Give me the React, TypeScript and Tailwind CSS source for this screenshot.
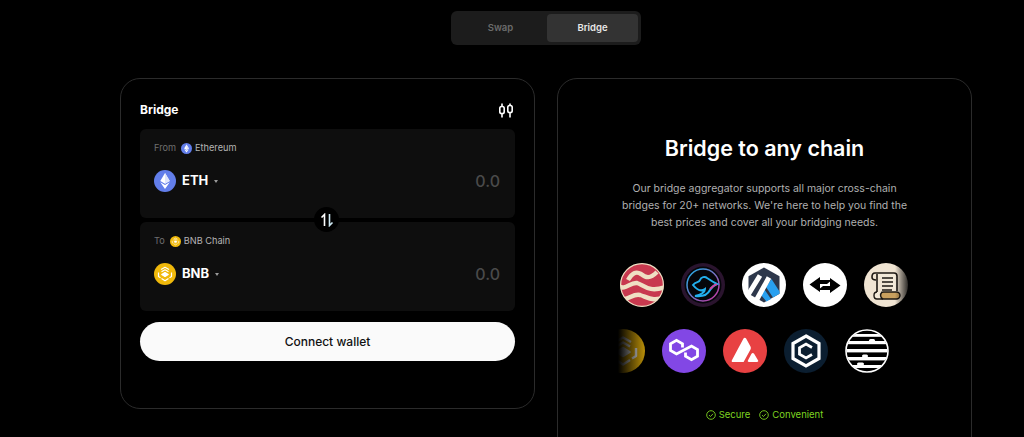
const font = "font-['Inter','Liberation_Sans',sans-serif]";

function EthIcon({ size }: { size: number }) {
  return (
    <svg width={size} height={size} viewBox="0 0 44 44" className="shrink-0">
      <circle cx="22" cy="22" r="22" fill="#627eea" />
      <path d="M22 6 L12.5 22 L22 27.5 L31.5 22 Z" fill="#fff" />
      <path d="M22 6 L22 27.5 L31.5 22 Z" fill="#dfe5fb" />
      <path d="M12.5 24.5 L22 38 L31.5 24.5 L22 30 Z" fill="#fff" />
    </svg>
  );
}

function BnbIcon({ size }: { size: number }) {
  return (
    <svg width={size} height={size} viewBox="0 0 44 44" className="shrink-0">
      <circle cx="22" cy="22" r="22" fill="#f0b90b" />
      <g fill="none" stroke="#fff" strokeWidth="2.4" strokeLinejoin="round">
        <path d="M14 13 L22 8.5 L30 13" />
        <path d="M9 19 V27 L13 29.5 M35 19 V27 L31 29.5" />
        <path d="M15 17.5 L22 13.5 L29 17.5" />
        <path d="M15.5 23 L22 19 L28.5 23 L22 27 Z" fill="#fff" />
        <path d="M15 31 L22 35.5 L29 31" />
      </g>
    </svg>
  );
}

function Liquality() {
  return (
    <svg width="44" height="44" viewBox="0 0 44 44" className="shrink-0">
      <defs>
        <clipPath id="liq">
          <circle cx="22" cy="22" r="21.5" />
        </clipPath>
      </defs>
      <g clipPath="url(#liq)">
        <rect width="44" height="44" fill="#c8394f" />
        <g fill="none" stroke="#efe0c4" strokeWidth="4.4">
          <path d="M8 17 C12 10 16 8 21 11 C26 15 30 16 37 9" />
          <path d="M-1 23 C5 28 10 19 17 20 C24 22 28 30 46 24" />
          <path d="M-1 34 C6 40 12 30 20 32 C27 34 34 40 46 33" />
        </g>
      </g>
      <circle cx="22" cy="22" r="21.4" fill="none" stroke="#efe0c4" strokeWidth="1.2" />
    </svg>
  );
}

function Hop() {
  return (
    <svg width="44" height="44" viewBox="0 0 44 44" className="shrink-0">
      <defs>
        <linearGradient id="hopRing" x1="0" y1="0" x2="1" y2="1">
          <stop offset="0" stopColor="#19b5ea" />
          <stop offset="1" stopColor="#d0309f" />
        </linearGradient>
      </defs>
      <circle cx="22" cy="22" r="22" fill="#2a142e" />
      <circle cx="22" cy="22" r="18.5" fill="#05060a" />
      <circle cx="22" cy="22" r="16" fill="none" stroke="url(#hopRing)" strokeWidth="1.5" />
      <path
        d="M12 22 C15 18 18 20 19 17 C20 14 24 13 26 15 C29 17 32 19 36 21 C33 22 31 24 29 27 C27 31 22 34 14 33 C20 32 24 29 24 26 C20 29 16 27 12 22 Z"
        fill="none"
        stroke="#22b0ee"
        strokeWidth="2"
      />
      <path d="M29 26 C31 24 33 22 36 21" stroke="#d6409f" strokeWidth="1.8" fill="none" />
    </svg>
  );
}

function Arbitrum() {
  return (
    <svg width="44" height="44" viewBox="0 0 44 44" className="shrink-0">
      <circle cx="22" cy="22" r="22" fill="#fff" />
      <path d="M22 4.5 L37.5 13.2 V30.8 L22 39.5 L6.5 30.8 V13.2 Z" fill="#2d374b" />
      <path d="M29.5 16 L37.5 28.5 V30.8 L31 34.5 L24 24 Z" fill="#28a0f0" />
      <path d="M22.5 26.5 L29 36 L24.5 38.5 L19 32 Z" fill="#28a0f0" />
      <path d="M6 32 L18 12.5 M14.5 37 L27 14.5" stroke="#fff" strokeWidth="5" fill="none" />
    </svg>
  );
}

function Swing() {
  return (
    <svg width="44" height="44" viewBox="0 0 44 44" className="shrink-0">
      <circle cx="22" cy="22" r="22" fill="#fff" />
      <path d="M6.5 21.5 L17 14 V17 H29 L24 21 H17 V29 Z" fill="#000" />
      <path d="M37.5 22.5 L27 30 V27 H15 L20 23 H27 V15 Z" fill="#000" />
    </svg>
  );
}

function Scroll() {
  return (
    <svg width="44" height="44" viewBox="0 0 44 44" className="shrink-0">
      <circle cx="22" cy="22" r="22" fill="#f0e4d2" />
      <path d="M11 10 C9 10 8 12 8 14 C8 16 10 17 12 17" fill="none" stroke="#1c1712" strokeWidth="1.6" />
      <path d="M11 10 H30 C32 10 33 11 33 13 V28" fill="#f3e9d8" stroke="#1c1712" strokeWidth="1.6" />
      <path d="M13 11 V30" stroke="#1c1712" strokeWidth="1.6" />
      <path d="M18 15 H29 M18 19 H29 M18 23 H29 M18 27 H28" stroke="#1c1712" strokeWidth="1.6" />
      <rect x="16" y="29" width="20" height="7" rx="3.5" fill="#c9a05e" stroke="#1c1712" strokeWidth="1.4" />
      <path d="M13 29 C9 29 9 36 13 36 H19 C16 35 16 31 18 29" fill="#f3e9d8" stroke="#1c1712" strokeWidth="1.4" />
    </svg>
  );
}

function Polygon() {
  return (
    <svg width="44" height="44" viewBox="0 0 44 44" className="shrink-0">
      <circle cx="22" cy="22" r="22" fill="#8247e5" />
      <path
        d="M20.5 18.5 V14.8 L14.5 11.3 L8.5 14.8 V21.5 L14.5 25 L29.5 17 L35.5 20.5 V27.2 L29.5 30.7 L23.5 27.2 V23.5"
        fill="none"
        stroke="#fff"
        strokeWidth="2.8"
      />
      <path d="M14.5 25 L20.5 28.5 V32" fill="none" />
    </svg>
  );
}

function Avalanche() {
  return (
    <svg width="44" height="44" viewBox="0 0 44 44" className="shrink-0">
      <circle cx="22" cy="22" r="22" fill="#e84142" />
      <path d="M20.5 9.5 C21.2 8.4 22.4 8.4 23.1 9.5 L27.5 17.5 C28 18.6 28 19.6 27.5 20.6 L20.6 33 H10 C8.8 33 8.3 32.2 8.9 31.2 Z" fill="#fff" />
      <path d="M28.5 24.8 C29.2 23.6 30.4 23.6 31.1 24.8 L35 31.3 C35.6 32.3 35.1 33 34 33 H26 C24.9 33 24.4 32.3 25 31.3 Z" fill="#fff" />
    </svg>
  );
}

function Celer() {
  return (
    <svg width="44" height="44" viewBox="0 0 44 44" className="shrink-0">
      <circle cx="22" cy="22" r="22" fill="#0b1e30" />
      <path d="M22 7 L35 14.5 V29.5 L22 37 L9 29.5 V14.5 Z" fill="none" stroke="#fff" strokeWidth="3.2" />
      <path d="M28 18.5 L22 15 L15.5 18.7 V25.3 L22 29 L28 25.5" fill="none" stroke="#fff" strokeWidth="2.8" />
    </svg>
  );
}

function Stripes() {
  return (
    <svg width="44" height="44" viewBox="0 0 44 44" className="shrink-0">
      <defs>
        <clipPath id="stripes">
          <circle cx="22" cy="22" r="20.5" />
        </clipPath>
      </defs>
      <circle cx="22" cy="22" r="21" fill="#000" stroke="#fff" strokeWidth="1.6" />
      <g clipPath="url(#stripes)" fill="#fff">
        <rect x="0" y="5" width="44" height="2.8" />
        <rect x="0" y="12" width="44" height="3.2" />
        <rect x="24" y="10" width="6" height="3" rx="1.5" />
        <rect x="0" y="20" width="44" height="3.4" />
        <rect x="0" y="28" width="44" height="3.4" />
        <rect x="17" y="25.5" width="6" height="3" rx="1.5" />
        <rect x="0" y="36" width="44" height="3" />
        <rect x="12" y="33.5" width="7" height="3" rx="1.5" />
      </g>
    </svg>
  );
}

function CandlesIcon() {
  return (
    <svg width="16" height="15" viewBox="0 0 16 15" fill="none" stroke="#fff" strokeWidth="1.6">
      <path d="M4 0.5 V3.5 M4 10.5 V14.5 M12 0.5 V2.5 M12 9.5 V14.5" />
      <rect x="1.8" y="3.5" width="4.4" height="7" rx="1.8" />
      <rect x="9.8" y="2.5" width="4.4" height="7" rx="1.8" />
    </svg>
  );
}

function SwapArrows() {
  return (
    <svg width="14" height="14" viewBox="0 0 14 14" fill="none" strokeWidth="1.6">
      <path d="M4.5 13 V1.5 L1.5 4.5" stroke="#fff" />
      <path d="M9.5 1 V12.5 L12.5 9.5" stroke="#cfeaf5" />
    </svg>
  );
}

function Check() {
  return (
    <svg width="10" height="10" viewBox="0 0 10 10" fill="none" stroke="#7ed321" strokeWidth="0.9">
      <circle cx="5" cy="5" r="4.3" />
      <path d="M3 5.1 L4.5 6.5 L7 3.8" />
    </svg>
  );
}

function TokenPanel({
  label,
  chain,
  symbol,
  icon,
  chainIcon,
}: {
  label: string;
  chain: string;
  symbol: string;
  icon: React.ReactNode;
  chainIcon: React.ReactNode;
}) {
  return (
    <div className="h-[89px] rounded-[6px] bg-[#0e0e0e] pl-[14px] pr-[15px] pt-[12px]">
      <div className="flex h-[14px] items-center text-[9.2px] leading-none">
        <span className="text-[#6f6f6f]">{label}</span>
        <span className="ml-[5px] mr-[3px]">{chainIcon}</span>
        <span className="text-[#b5b5b5]">{chain}</span>
      </div>
      <div className="mt-[14px] flex h-[24px] items-center">
        {icon}
        <span className="ml-[6px] text-[13px] font-bold text-white">{symbol}</span>
        <span className="ml-[6px] mt-[1px] h-0 w-0 border-x-[2.5px] border-t-[3px] border-x-transparent border-t-[#9a9a9a]" />
        <span className="ml-auto text-[16px] font-medium text-[#4a4a4a]">0.0</span>
      </div>
    </div>
  );
}

export default function App() {
  return (
    <div className={`${font} flex h-[437px] flex-col items-center overflow-hidden bg-black pl-[68px] pt-[11px]`}>
      <div className="flex h-[34px] w-[190px] shrink-0 rounded-[6px] bg-[#1c1c1c] p-[3px]">
        <div className="flex flex-1 items-center justify-center text-[9.5px] font-semibold text-[#6b6b6b]">Swap</div>
        <div className="flex w-[91px] items-center justify-center rounded-[4px] bg-[#333333] text-[9.5px] font-semibold text-[#e8e8e8]">
          Bridge
        </div>
      </div>

      <div className="mt-[33px] flex w-[852px] shrink-0 gap-[22px]">
        {/* left: bridge form */}
        <div className="h-[331px] w-[415px] rounded-[20px] border border-[#2b2b2b] px-[19px] pt-[22px]">
          <div className="flex h-[18px] items-center justify-between">
            <h2 className="text-[12px] font-bold text-white">Bridge</h2>
            <span className="mr-[1px]">
              <CandlesIcon />
            </span>
          </div>
          <div className="relative mt-[10px] flex flex-col gap-[4px]">
            <TokenPanel
              label="From"
              chain="Ethereum"
              symbol="ETH"
              icon={<EthIcon size={22} />}
              chainIcon={<EthIcon size={11} />}
            />
            <TokenPanel
              label="To"
              chain="BNB Chain"
              symbol="BNB"
              icon={<BnbIcon size={22} />}
              chainIcon={<BnbIcon size={11} />}
            />
            <div className="absolute left-[174px] top-[78px] flex h-[25px] w-[25px] items-center justify-center rounded-full bg-black">
              <SwapArrows />
            </div>
          </div>
          <button className="mt-[11px] h-[39px] w-full rounded-full bg-[#fafafa] text-[12px] font-medium text-[#111]">
            Connect wallet
          </button>
        </div>

        {/* right: marketing */}
        <div className="flex h-[420px] w-[415px] flex-col items-center rounded-[20px] border border-[#2b2b2b] pt-[54px]">
          <h1 className="text-[21.5px] font-semibold leading-[30px] text-white">Bridge to any chain</h1>
          <p className="mt-[17px] w-[300px] text-center text-[10.5px] leading-[17px] text-[#b0b0b0]">
            Our bridge aggregator supports all major cross-chain bridges for 20+ networks. We're here to help you find
            the best prices and cover all your bridging needs.
          </p>
          <div className="mt-[32px] flex w-[293px] flex-col gap-[22px]">
            <div className="relative flex gap-[17px] overflow-hidden pl-[2px]">
              <Liquality />
              <Hop />
              <Arbitrum />
              <Swing />
              <Scroll />
              <div className="absolute bottom-0 right-0 top-0 w-[16px] bg-gradient-to-l from-black to-transparent" />
            </div>
            <div className="relative flex gap-[17px] overflow-hidden">
              <div className="-ml-[17px]">
                <BnbIcon size={44} />
              </div>
              <Polygon />
              <Avalanche />
              <Celer />
              <Stripes />
              <div className="absolute bottom-0 left-0 top-0 w-[28px] bg-gradient-to-r from-black to-black/20" />
            </div>
          </div>
          <div className="mt-[35px] flex items-center gap-[9px] text-[9.5px] text-[#7ed321]">
            <span className="flex items-center gap-[3px]">
              <Check />
              Secure
            </span>
            <span className="flex items-center gap-[3px]">
              <Check />
              Convenient
            </span>
          </div>
        </div>
      </div>
    </div>
  );
}
